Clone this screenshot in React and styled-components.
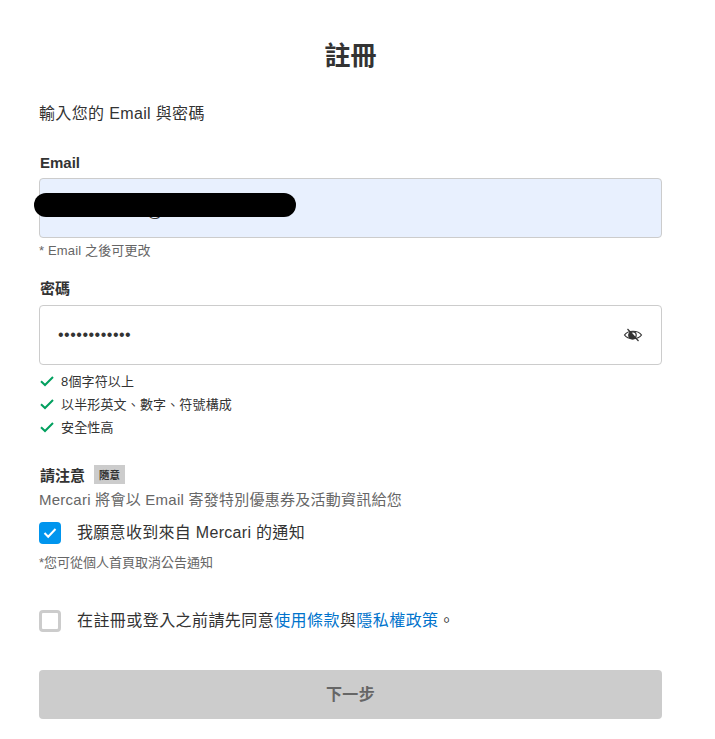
import React from "react";
import styled, { createGlobalStyle } from "styled-components";

const Global = createGlobalStyle`
  html, body { margin: 0; padding: 0; background: #fff; }
  body { font-family: "Liberation Sans", Arial, "Noto Sans CJK TC", sans-serif; color: #333; }
  * { box-sizing: border-box; }
`;
const Page = styled.main`
  width: 715px;
  height: 739px;
  overflow: hidden;
  padding: 38px 53px 0 39px;
`;
const Title = styled.h1`
  margin: 0 0 28px;
  font-size: 26px;
  line-height: 36px;
  font-weight: 700;
  text-align: center;
  color: #333;
`;
const Intro = styled.p`
  margin: 0 0 27px;
  font-size: 16px;
  line-height: 24px;
  letter-spacing: 0.35px;
  color: #333;
`;
const Label = styled.label`
  display: block;
  font-size: 15px;
  line-height: 20px;
  font-weight: 700;
  color: #333;
  margin-bottom: ${(p) => (p.$tight ? "5px" : "6px")};
  padding-left: 1px;
`;
const Field = styled.div`
  position: relative;
  height: 60px;
  border: 1px solid #ccc;
  border-radius: 4px;
  background: ${(p) => (p.$filled ? "#e8f0fe" : "#fff")};
  display: flex;
  align-items: center;
  justify-content: space-between;
  padding: 0 18px;
`;
const EmailValue = styled.span`
  padding: 8px 0 0 89px;
  font-size: 16px;
  color: #333;
`;
const Redaction = styled.div`
  position: absolute;
  left: -6px;
  top: 13.5px;
  width: 262px;
  height: 24px;
  border-radius: 12px;
  background: #000;
`;
const Dots = styled.span`
  font-size: 16px;
  letter-spacing: 0.5px;
  color: #333;
`;
const Help = styled.p`
  margin: 3px 0 18px;
  font-size: 13px;
  line-height: 20px;
  letter-spacing: 0.15px;
  color: #666;
`;
const Rules = styled.ul`
  list-style: none;
  margin: 4px 0 26px;
  padding: 0;
`;
const Rule = styled.li`
  display: flex;
  align-items: center;
  gap: 7px;
  height: 23px;
  padding-left: 1px;
  font-size: 13px;
  letter-spacing: 0.15px;
  color: #333;
`;
const NoticeHead = styled.div`
  display: flex;
  align-items: center;
  gap: 9px;
  height: 20px;
  margin-bottom: 6px;
  padding-left: 1px;
`;
const NoticeTitle = styled.span`
  font-size: 15px;
  font-weight: 700;
  color: #333;
`;
const Tag = styled.span`
  background: #ccc;
  height: 19px;
  width: 31px;
  display: flex;
  align-items: center;
  justify-content: center;
  font-size: 10.5px;
  font-weight: 700;
  color: #333;
`;
const NoticeText = styled.p`
  margin: 0 0 11px;
  font-size: 15px;
  line-height: 20px;
  letter-spacing: 0.25px;
  color: #666;
`;
const CheckRow = styled.div`
  display: flex;
  align-items: center;
  gap: 16px;
  font-size: 16px;
  line-height: 24px;
  letter-spacing: 0.3px;
  color: #333;
`;
const Box = styled.span`
  width: 22px;
  height: 22px;
  border-radius: 4px;
  display: flex;
  align-items: center;
  justify-content: center;
  background: ${(p) => (p.$on ? "#0095ee" : "#fff")};
  border: ${(p) => (p.$on ? "none" : "3px solid #ccc")};
  flex: none;
`;
const Foot = styled.p`
  margin: 8px 0 36px;
  font-size: 13px;
  line-height: 20px;
  color: #666;
`;
const Terms = styled.span`
  letter-spacing: 0.43px;
`;
const A = styled.a`
  color: #0073cc;
  text-decoration: none;
`;
const Next = styled.button`
  display: block;
  width: 100%;
  height: 49px;
  margin-top: 37px;
  padding: 0 0 3px;
  border: 0;
  border-radius: 4px;
  background: #ccc;
  color: #666;
  font: 700 16px "Liberation Sans", "Noto Sans CJK TC", sans-serif;
  letter-spacing: 0.4px;
`;

const Tick = () => (
  <svg width="14" height="12" viewBox="0 0 14 12" fill="none" stroke="#02a05f" strokeWidth="2">
    <path d="M1 6.2 L5 10 L13 2" />
  </svg>
);
const Eye = () => (
  <svg width="20" height="20" viewBox="0 0 20 20" fill="none" stroke="#333" strokeWidth="1.2">
    <path d="M1.5 10 C5 5 15 5 18.5 10 C15 15 5 15 1.5 10 Z" />
    <path d="M7 7.5 A3.6 3.6 0 0 0 12 13 Z" fill="#333" />
    <circle cx="10" cy="10" r="3.2" />
    <path d="M4.5 4 L15.5 16" />
  </svg>
);

export default function App() {
  return (
    <Page>
      <Global />
      <Title>註冊</Title>
      <Intro>輸入您的 Email 與密碼</Intro>
      <Label $tight>Email</Label>
      <Field $filled>
        <EmailValue>@</EmailValue>
        <Redaction />
      </Field>
      <Help>* Email 之後可更改</Help>
      <Label>密碼</Label>
      <Field>
        <Dots>••••••••••••</Dots>
        <Eye />
      </Field>
      <Rules>
        <Rule><Tick />8個字符以上</Rule>
        <Rule><Tick />以半形英文、數字、符號構成</Rule>
        <Rule><Tick />安全性高</Rule>
      </Rules>
      <NoticeHead>
        <NoticeTitle>請注意</NoticeTitle>
        <Tag>隨意</Tag>
      </NoticeHead>
      <NoticeText>Mercari 將會以 Email 寄發特別優惠券及活動資訊給您</NoticeText>
      <CheckRow>
        <Box $on>
          <svg width="14" height="12" viewBox="0 0 14 12" fill="none" stroke="#fff" strokeWidth="2">
            <path d="M1.5 6 L5.2 9.8 L12.5 2" />
          </svg>
        </Box>
        我願意收到來自 Mercari 的通知
      </CheckRow>
      <Foot>*您可從個人首頁取消公告通知</Foot>
      <CheckRow>
        <Box />
        <Terms>在註冊或登入之前請先同意<A>使用條款</A>與<A>隱私權政策</A>。</Terms>
      </CheckRow>
      <Next>下一步</Next>
    </Page>
  );
}
